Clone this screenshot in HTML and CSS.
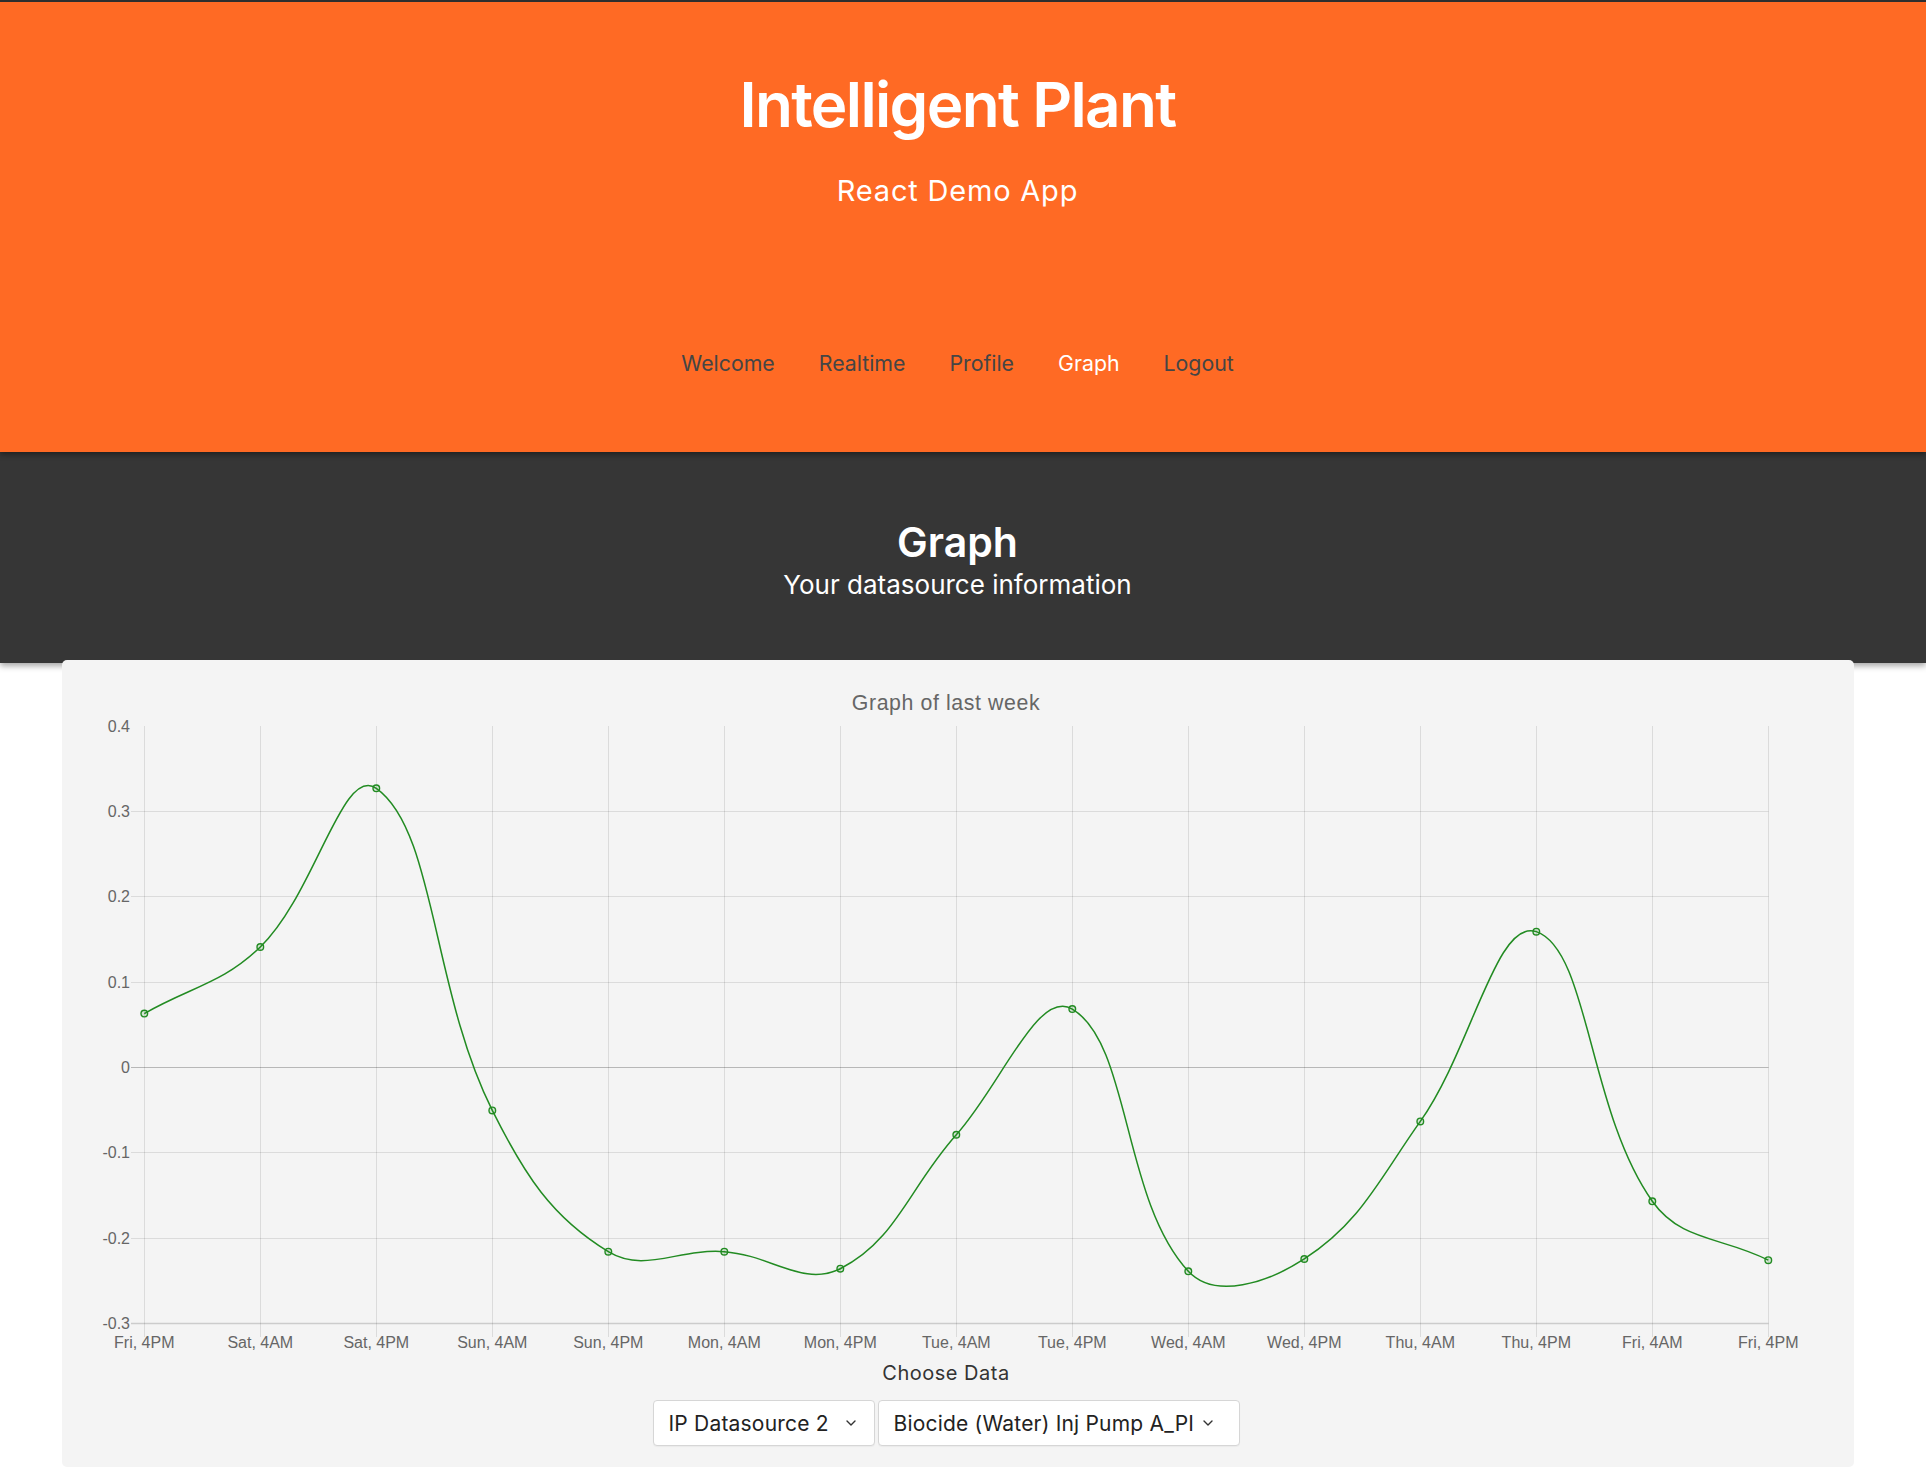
FILE: index.html
```html
<!DOCTYPE html>
<html lang="en">
<head>
<meta charset="utf-8">
<title>Intelligent Plant - React Demo App</title>
<link rel="stylesheet" href="styles.css">
</head>
<body>
<header class="hero">
  <h1 class="hero-title">Intelligent Plant</h1>
  <p class="hero-sub">React Demo App</p>
  <nav class="nav">
    <a class="nav-link">Welcome</a>
    <a class="nav-link">Realtime</a>
    <a class="nav-link">Profile</a>
    <a class="nav-link nav-link-active">Graph</a>
    <a class="nav-link">Logout</a>
  </nav>
</header>
<section class="banner">
  <h2 class="banner-title">Graph</h2>
  <p class="banner-sub">Your datasource information</p>
</section>
<main class="card">
  <svg class="chart" width="1768" height="701" viewBox="0 0 1768 701">
    <text class="chart-title" x="884" y="49.8">Graph of last week</text>
    <g class="grid">
      <line x1="82.5" y1="66" x2="82.5" y2="677"/>
      <line x1="198.5" y1="66" x2="198.5" y2="677"/>
      <line x1="314.5" y1="66" x2="314.5" y2="677"/>
      <line x1="430.5" y1="66" x2="430.5" y2="677"/>
      <line x1="546.5" y1="66" x2="546.5" y2="677"/>
      <line x1="662.5" y1="66" x2="662.5" y2="677"/>
      <line x1="778.5" y1="66" x2="778.5" y2="677"/>
      <line x1="894.5" y1="66" x2="894.5" y2="677"/>
      <line x1="1010.5" y1="66" x2="1010.5" y2="677"/>
      <line x1="1126.5" y1="66" x2="1126.5" y2="677"/>
      <line x1="1242.5" y1="66" x2="1242.5" y2="677"/>
      <line x1="1358.5" y1="66" x2="1358.5" y2="677"/>
      <line x1="1474.5" y1="66" x2="1474.5" y2="677"/>
      <line x1="1590.5" y1="66" x2="1590.5" y2="677"/>
      <line x1="1706.5" y1="66" x2="1706.5" y2="677"/>
      <line x1="69" y1="151.5" x2="1706.5" y2="151.5"/>
      <line x1="69" y1="236.5" x2="1706.5" y2="236.5"/>
      <line x1="69" y1="322.5" x2="1706.5" y2="322.5"/>
      <line x1="69" y1="492.5" x2="1706.5" y2="492.5"/>
      <line x1="69" y1="578.5" x2="1706.5" y2="578.5"/>
    </g>
    <line class="grid-zero" x1="69" y1="407.5" x2="1706.5" y2="407.5"/>
    <line class="grid-axis" x1="69" y1="663.5" x2="1706.5" y2="663.5"/>
    <g class="ylabels">
      <text x="68" y="71.5">0.4</text>
      <text x="68" y="157">0.3</text>
      <text x="68" y="242.4">0.2</text>
      <text x="68" y="327.7">0.1</text>
      <text x="68" y="413">0</text>
      <text x="68" y="498.4">-0.1</text>
      <text x="68" y="583.7">-0.2</text>
      <text x="68" y="669">-0.3</text>
    </g>
    <g class="xlabels">
      <text x="82.3" y="688.3">Fri, 4PM</text>
      <text x="198.3" y="688.3">Sat, 4AM</text>
      <text x="314.3" y="688.3">Sat, 4PM</text>
      <text x="430.3" y="688.3">Sun, 4AM</text>
      <text x="546.3" y="688.3">Sun, 4PM</text>
      <text x="662.3" y="688.3">Mon, 4AM</text>
      <text x="778.3" y="688.3">Mon, 4PM</text>
      <text x="894.3" y="688.3">Tue, 4AM</text>
      <text x="1010.3" y="688.3">Tue, 4PM</text>
      <text x="1126.3" y="688.3">Wed, 4AM</text>
      <text x="1242.3" y="688.3">Wed, 4PM</text>
      <text x="1358.3" y="688.3">Thu, 4AM</text>
      <text x="1474.3" y="688.3">Thu, 4PM</text>
      <text x="1590.3" y="688.3">Fri, 4AM</text>
      <text x="1706.3" y="688.3">Fri, 4PM</text>
    </g>
    <path id="series-line" class="series-line" d=""/>
    <g id="series-points" class="series-points"></g>
  </svg>
  <div class="choose">Choose Data</div>
  <div class="selects">
    <div class="select select-a">
      <span class="select-text">IP Datasource 2</span>
      <svg class="chev" width="10" height="6" viewBox="0 0 10 6"><path d="M1 1 L5 5 L9 1"/></svg>
    </div>
    <div class="select select-b">
      <span class="select-text">Biocide (Water) Inj Pump A_PI</span>
      <svg class="chev" width="10" height="6" viewBox="0 0 10 6"><path d="M1 1 L5 5 L9 1"/></svg>
    </div>
  </div>
</main>
<script src="script.js"></script>
</body>
</html>
```

FILE: styles.css
```css
* { box-sizing: border-box; }
html, body { margin: 0; padding: 0; }
body {
  background: #ffffff;
  font-family: Inter, "Noto Sans", sans-serif;
}

.hero {
  position: relative;
  z-index: 1;
  background: #ff6a24;
  border-top: 2px solid #2e2e2e;
  text-align: center;
  padding: 64px 11px 75px 0;
  box-shadow: 0 2px 6px rgba(0, 0, 0, 0.45);
}
.hero-title {
  margin: 0;
  font-size: 62px;
  line-height: 78px;
  font-weight: 600;
  letter-spacing: -1.65px;
  color: #ffffff;
}
.hero-sub {
  margin: 29px 0 0;
  font-size: 29px;
  line-height: 35px;
  font-weight: 400;
  letter-spacing: 0.8px;
  color: #ffffff;
}
.nav {
  margin-top: 142px;
  display: flex;
  justify-content: center;
  gap: 44px;
  font-size: 21.3px;
  line-height: 27px;
}
.nav-link {
  color: #454545;
  text-decoration: none;
}
.nav-link-active { color: #ffffff; }

.banner {
  background: #363636;
  color: #ffffff;
  text-align: center;
  padding: 65px 11px 62px 0;
  box-shadow: 0 3px 6px rgba(0, 0, 0, 0.35);
}
.banner-title {
  margin: 0;
  font-size: 41px;
  line-height: 50px;
  font-weight: 600;
}
.banner-sub {
  margin: 2px 0 0;
  font-size: 26px;
  line-height: 32px;
  font-weight: 400;
}

.card {
  display: block;
  margin: -3px 0 0 62px;
  width: 1792px;
  background: #f4f4f4;
  border-radius: 5px;
  padding: 0 24px 21px 0;
}
.chart { display: block; }
.chart-title {
  font-family: "Liberation Sans", Arial, sans-serif;
  font-size: 21.3px;
  letter-spacing: 0.6px;
  fill: #666666;
  text-anchor: middle;
}
.grid line { stroke: rgba(0, 0, 0, 0.1); stroke-width: 1; }
.grid-zero { stroke: rgba(0, 0, 0, 0.25); stroke-width: 1; }
.grid-axis { stroke: rgba(0, 0, 0, 0.16); stroke-width: 1.5; }
.ylabels text, .xlabels text {
  font-family: "Liberation Sans", Arial, sans-serif;
  font-size: 16px;
  fill: #666666;
}
.ylabels text { text-anchor: end; }
.xlabels text { text-anchor: middle; }
.series-line {
  fill: none;
  stroke: #228b22;
  stroke-width: 1.5;
}
.series-points circle {
  fill: rgba(34, 139, 34, 0.15);
  stroke: #228b22;
  stroke-width: 1.4;
}

.choose {
  text-align: center;
  font-size: 20px;
  line-height: 25px;
  letter-spacing: 0.5px;
  color: #333333;
}
.selects {
  margin-top: 14px;
  display: flex;
  justify-content: center;
  gap: 3px;
}
.select {
  height: 46px;
  background: #ffffff;
  border: 1px solid #d6d6d6;
  border-radius: 4px;
  display: flex;
  align-items: center;
  justify-content: space-between;
  padding-left: 15px;
  font-size: 21px;
  letter-spacing: 0.2px;
  color: #222222;
  box-shadow: 0 1px 1px rgba(0, 0, 0, 0.04);
}
.select-a { width: 222px; padding-right: 18px; }
.select-b { width: 362px; padding-right: 26px; }
.chev path {
  fill: none;
  stroke: #333333;
  stroke-width: 1.4;
  stroke-linecap: round;
  stroke-linejoin: round;
}
```

FILE: script.js
```js
(function () {
  var vals = [0.063, 0.141, 0.327, -0.0505, -0.216, -0.216, -0.236, -0.079,
              0.0683, -0.239, -0.2246, -0.0634, 0.159, -0.157, -0.226];
  var x0 = 82.3, dx = 116, top = 66, bottom = 663.3, per = 853.33, t = 0.4;
  var pts = vals.map(function (v, i) {
    return { x: x0 + dx * i, y: top + (0.4 - v) * per };
  });
  function clampY(y) { return Math.max(top, Math.min(bottom, y)); }
  var cps = pts.map(function (p, i) {
    var prev = pts[i - 1] || p, next = pts[i + 1] || p;
    var d01 = Math.hypot(p.x - prev.x, p.y - prev.y);
    var d12 = Math.hypot(next.x - p.x, next.y - p.y);
    var s = d01 + d12;
    var fa = t * (s ? d01 / s : 0), fb = t * (s ? d12 / s : 0);
    return {
      px: p.x - fa * (next.x - prev.x), py: clampY(p.y - fa * (next.y - prev.y)),
      nx: p.x + fb * (next.x - prev.x), ny: clampY(p.y + fb * (next.y - prev.y))
    };
  });
  var f = function (n) { return n.toFixed(2); };
  var d = 'M' + f(pts[0].x) + ' ' + f(pts[0].y);
  for (var i = 1; i < pts.length; i++) {
    d += ' C' + f(cps[i - 1].nx) + ' ' + f(cps[i - 1].ny) + ' ' +
         f(cps[i].px) + ' ' + f(cps[i].py) + ' ' + f(pts[i].x) + ' ' + f(pts[i].y);
  }
  document.getElementById('series-line').setAttribute('d', d);
  var g = document.getElementById('series-points');
  var ns = 'http://www.w3.org/2000/svg';
  pts.forEach(function (p) {
    var c = document.createElementNS(ns, 'circle');
    c.setAttribute('cx', f(p.x));
    c.setAttribute('cy', f(p.y));
    c.setAttribute('r', '3.3');
    g.appendChild(c);
  });
})();
```
